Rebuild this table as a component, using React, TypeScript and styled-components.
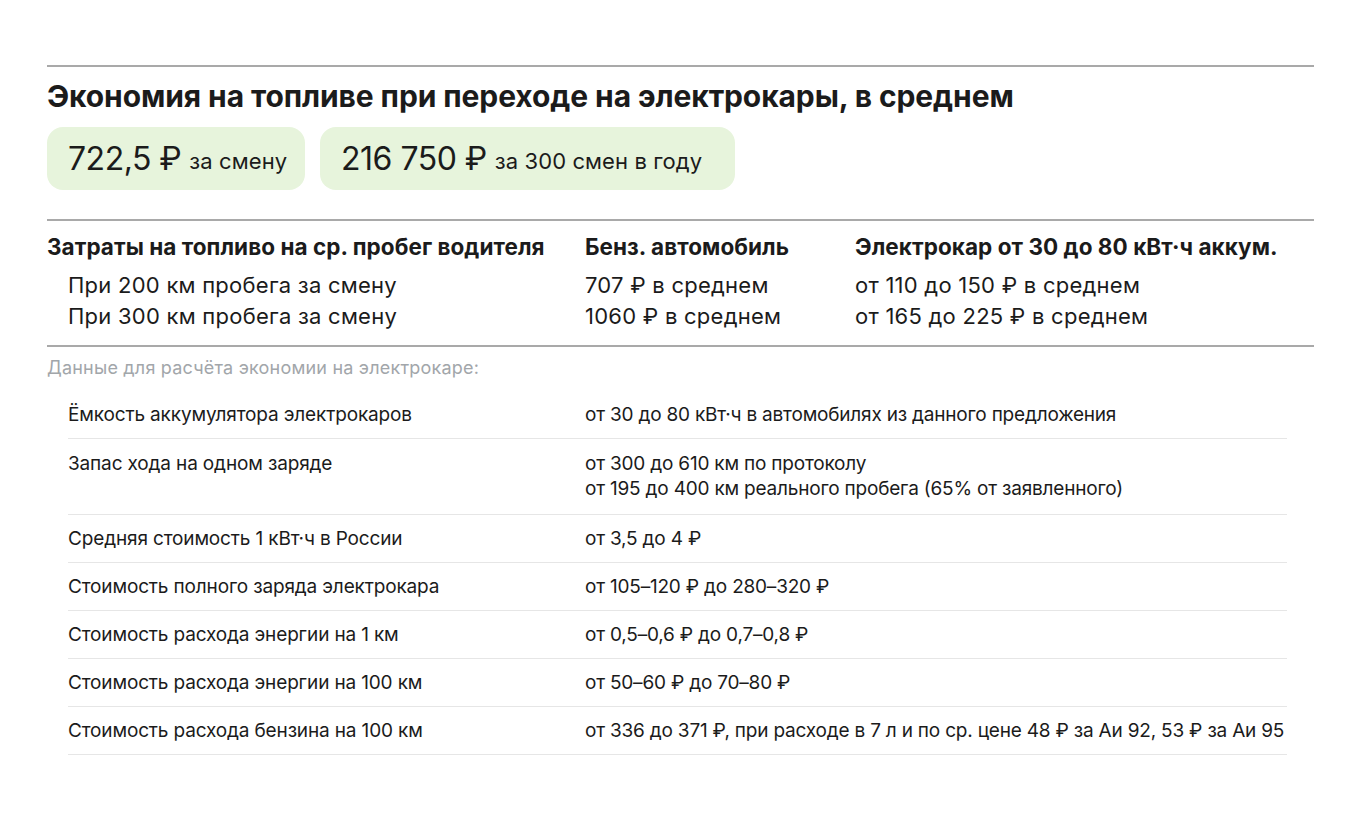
import React from "react";
import styled, { createGlobalStyle } from "styled-components";

const Global = createGlobalStyle`
  html, body { margin: 0; padding: 0; background: #ffffff; }
  body { font-family: Inter, "Noto Sans", sans-serif; color: #1b1b1b; }
`;

const Page = styled.div`
  width: 1360px;
  height: 822px;
  box-sizing: border-box;
  padding: 65px 46px 0 47px;
`;

const Section = styled.section<{ $pad?: string }>`
  border-top: 2px solid #a9a9a9;
  padding: ${(p) => p.$pad || "0"};
`;

const Title = styled.h1`
  margin: 0;
  font-size: 30px;
  line-height: 36px;
  font-weight: 700;
  letter-spacing: -0.1px;
`;

const Pills = styled.div`
  display: flex;
  gap: 15px;
  margin-top: 13px;
`;

const Pill = styled.div<{ $w: number }>`
  width: ${(p) => p.$w}px;
  height: 63px;
  box-sizing: border-box;
  padding: 0 0 0 21px;
  border-radius: 16px;
  background: #e7f4dc;
  display: flex;
  align-items: center;
  gap: 8px;
`;

const Big = styled.span`
  font-size: 32px;
  font-weight: 400;
  letter-spacing: -0.5px;
`;

const Small = styled.span`
  font-size: 22px;
  font-weight: 400;
  letter-spacing: 0.1px;
  padding-top: 5px;
`;

const CostGrid = styled.div`
  display: grid;
  grid-template-columns: 538px 270px 1fr;
  padding: 12px 0 15px;
`;

const Head = styled.div`
  font-size: 22.5px;
  line-height: 28px;
  font-weight: 700;
  margin-bottom: 10px;
  letter-spacing: 0.05px;
`;

const Cell = styled.div<{ $indent?: boolean; $last?: boolean }>`
  font-size: 22px;
  line-height: 28px;
  padding-left: ${(p) => (p.$indent ? "21px" : "0")};
  margin-bottom: ${(p) => (p.$last ? "0" : "3px")};
  letter-spacing: 0.25px;
`;

const Caption = styled.div`
  font-size: 18px;
  line-height: 22px;
  color: #a2a6aa;
  padding-top: 10px;
  letter-spacing: 0.2px;
`;

const Table = styled.div`
  margin: 12px 27px 0 21px;
`;

const Row = styled.div<{ $multi?: boolean }>`
  display: grid;
  grid-template-columns: 517px 1fr;
  padding: ${(p) => (p.$multi ? "12px 0 13px" : "11px 0 11px")};
  border-bottom: 1px solid #e6e6e6;
  font-size: 19px;
  line-height: 25px;
`;

const Label = styled.div`
  letter-spacing: -0.15px;
`;

const Value = styled.div`
  letter-spacing: -0.2px;
  white-space: nowrap;
`;

const rows: [string, string[]][] = [
  ["Ёмкость аккумулятора электрокаров", ["от 30 до 80 кВт·ч в автомобилях из данного предложения"]],
  ["Запас хода на одном заряде", ["от 300 до 610 км по протоколу", "от 195 до 400 км реального пробега (65% от заявленного)"]],
  ["Средняя стоимость 1 кВт·ч в России", ["от 3,5 до 4 ₽"]],
  ["Стоимость полного заряда электрокара", ["от 105–120 ₽ до 280–320 ₽"]],
  ["Стоимость расхода энергии на 1 км", ["от 0,5–0,6 ₽ до 0,7–0,8 ₽"]],
  ["Стоимость расхода энергии на 100 км", ["от 50–60 ₽ до 70–80 ₽"]],
  ["Стоимость расхода бензина на 100 км", ["от 336 до 371 ₽, при расходе в 7 л и по ср. цене 48 ₽ за Аи 92, 53 ₽ за Аи 95"]],
];

export default function App() {
  return (
    <>
      <Global />
      <Page>
        <Section $pad="11px 0 29px">
          <Title>Экономия на топливе при переходе на электрокары, в среднем</Title>
          <Pills>
            <Pill $w={258}>
              <Big>722,5 ₽</Big>
              <Small>за смену</Small>
            </Pill>
            <Pill $w={415}>
              <Big>216 750 ₽</Big>
              <Small>за 300 смен в году</Small>
            </Pill>
          </Pills>
        </Section>
        <Section>
          <CostGrid>
            <Head>Затраты на топливо на ср. пробег водителя</Head>
            <Head>Бенз. автомобиль</Head>
            <Head>Электрокар от 30 до 80 кВт·ч аккум.</Head>
            <Cell $indent>При 200 км пробега за смену</Cell>
            <Cell>707 ₽ в среднем</Cell>
            <Cell>от 110 до 150 ₽ в среднем</Cell>
            <Cell $indent $last>При 300 км пробега за смену</Cell>
            <Cell $last>1060 ₽ в среднем</Cell>
            <Cell $last>от 165 до 225 ₽ в среднем</Cell>
          </CostGrid>
        </Section>
        <Section>
          <Caption>Данные для расчёта экономии на электрокаре:</Caption>
          <Table>
            {rows.map(([l, v]) => (
              <Row key={l} $multi={v.length > 1}>
                <Label>{l}</Label>
                <Value>
                  {v.map((t) => (
                    <div key={t}>{t}</div>
                  ))}
                </Value>
              </Row>
            ))}
          </Table>
        </Section>
      </Page>
    </>
  );
}
